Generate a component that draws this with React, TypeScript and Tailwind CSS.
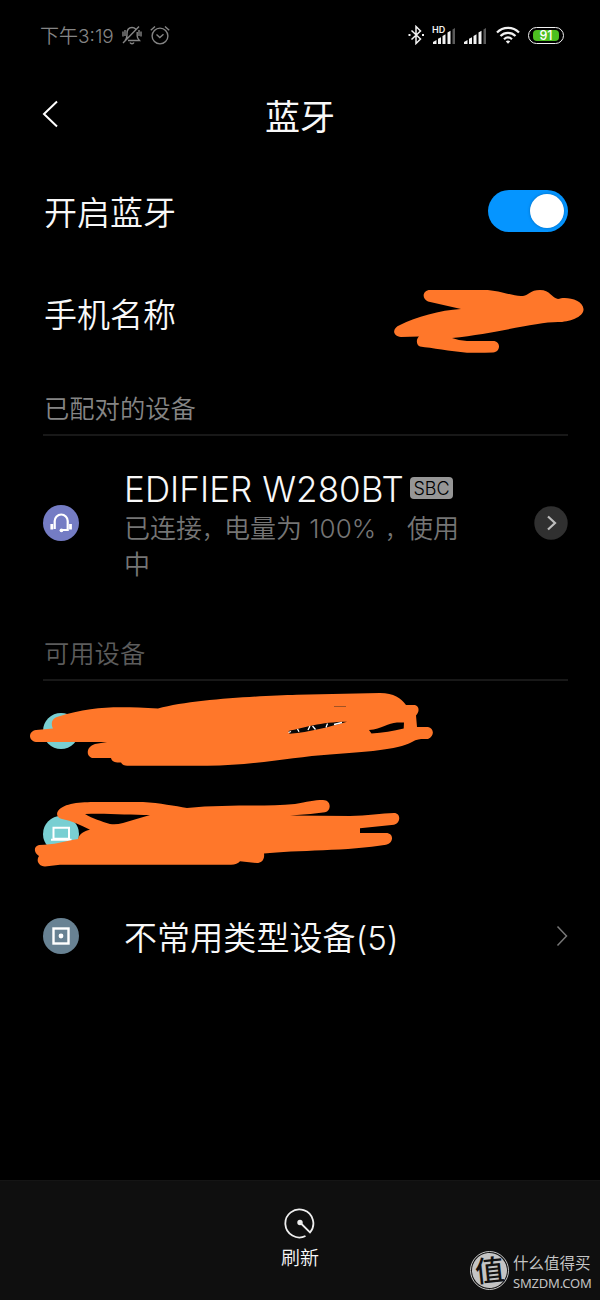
import React from 'react';

const ORANGE = '#ff772a';

function SignalBars() {
    return (
        <svg width="23" height="17" viewBox="0 0 23 17">
            <path d="M0 17v-2l3.500-2v4zM5 17v-5.200l3-1.500V17zM9.500 17V9l3-1.800V17zM14.500 17V5.500l3-1.800V17z" fill="#f2f2f2" />
            <path d="M19.500 17V2.500l2.500-1.500v16z" fill="#5a5a5a" />
        </svg>
    );
}

function StatusBar() {
    return (
        <div className="h-[70px] pl-10 pr-9 flex items-center justify-between text-[#858585]">
            <div className="flex items-center">
                <span className="w-[73px] pt-[2px] text-[19px] leading-none whitespace-nowrap">下午3:19</span>
                <svg className="ml-[9px]" width="20" height="20" viewBox="0 0 20 20" fill="none" stroke="currentColor" strokeWidth="1.400">
                    <path d="M3 15.500c2-2 2-3 2-7C5 4.500 7 2.500 10 2.500c1.500 0 2.800.5 3.700 1.400M15.200 7v4c0 2 .8 3 2.200 4.500H6M1 18 17 1.500M8 17.500c.8 1.600 3.200 1.600 4 0" />
                    <path d="M1 6.500v5M3 5v6M17 5v6M19 6.500v5" />
                </svg>
                <svg className="ml-[8px]" width="20" height="20" viewBox="0 0 20 20" fill="none" stroke="currentColor" strokeWidth="1.400">
                    <circle cx="10" cy="11" r="7.900" />
                    <path d="M.8 5.200 5 1.500M19.200 5.200 15 1.500M6.500 9.500l3.300 3 3.700-3.300" />
                </svg>
            </div>
            <div className="flex items-center">
                <svg width="17" height="20" viewBox="0 0 17 20" fill="none" stroke="#f2f2f2" strokeWidth="1.500">
                    <path d="m3.500 5.500 9 8.500-4.500 4.500V1.500L12.500 6l-9 8.500" />
                    <path d="M.5 10h2M14 10h2" strokeWidth="2" />
                </svg>
                <div className="relative ml-[8px]">
                    <span className="absolute left-[-1px] top-[-2px] text-[9px] font-semibold leading-none text-[#f2f2f2]">HD</span>
                    <SignalBars />
                </div>
                <div className="ml-[8px]">
                    <SignalBars />
                </div>
                <svg className="ml-[9px]" width="24" height="18" viewBox="0 0 24 18" fill="none" stroke="#f2f2f2" strokeWidth="2.200">
                    <path d="M1 6.500c6-6.200 16-6.200 22 0M4.500 10c4.300-4.200 10.700-4.200 15 0M8 13.300c2.400-2.200 5.600-2.200 8 0" />
                    <path d="m9.800 15.500 2.200 2.300 2.200-2.300c-1.200-1.200-3.200-1.200-4.400 0z" fill="#f2f2f2" stroke="none" />
                </svg>
                <div className="ml-[8px] w-9 h-[17px] rounded-full border-[1.500px] border-[#f2f2f2] px-[4px] py-[2px]">
                    <div className="h-full rounded-[4px] bg-[#4cbf1f] text-white text-[12.500px] font-medium flex items-center justify-center leading-none pt-[2px]">91</div>
                </div>
            </div>
        </div>
    );
}

function SectionTitle({ children, dim }: { children: React.ReactNode; dim?: boolean }) {
    return (
        <div className="mr-8 ml-[43px] h-[69px] pt-[29px] border-b-2 border-[#181818]">
            <div className={`pl-px text-[25.300px] leading-[26px] ${dim ? 'text-[#5c5c5c]' : 'text-[#858585]'}`}>{children}</div>
        </div>
    );
}

function DeviceIcon({ color, children }: { color: string; children?: React.ReactNode }) {
    return (
        <svg className="shrink-0 -mt-[2px]" width="36" height="36" viewBox="0 0 36 36" fill="none" stroke="#fff">
            <circle cx="18" cy="18" r="18" fill={color} stroke="none" />
            {children}
        </svg>
    );
}

export default function App() {
    return (
        <div className="w-[600px] h-[1300px] bg-black text-[#f8f8f8] font-[350] flex flex-col overflow-hidden font-[Inter,'Noto_Sans_CJK_SC',sans-serif]">
            <StatusBar />
            <header className="h-[89px] px-[42px] grid grid-cols-[1fr_auto_1fr] items-center">
                <svg className="-mt-[2px]" width="16" height="28" viewBox="0 0 16 28" fill="none" stroke="#fff" strokeWidth="2">
                    <path d="M15 1.500 2 14l13 12.500" />
                </svg>
                <h1 className="pt-[5px] text-[35px] leading-none font-normal">蓝牙</h1>
            </header>

            <div className="h-[104px] pl-11 pr-8 flex items-center justify-between text-[33px]">
                <span className="pt-[5px]">开启蓝牙</span>
                <div className="w-20 h-[42px] rounded-full bg-[#0595ff] flex items-center justify-end pr-[4px]">
                    <div className="size-[34px] rounded-full bg-white shadow-[0_0_3px_#0369b8]" />
                </div>
            </div>
            <div className="relative h-[104px] pl-11 flex items-center text-[33px]">
                <span className="pt-[2px]">手机名称</span>
                <svg className="absolute left-[390px] top-[21px]" width="200" height="72" viewBox="390 284 200 72">
                    <path
                        fill={ORANGE}
                        d="M430 290H484C501 290 513 297 523 296C529 295 530 290 540 290C550 290 552 298 558 299C565 296 583 299 583.500 309C584 317 569 322 558 322C536 322 498 333 452 338Q460 341 467 341L493 341C501 341 501 352 493 352.500Q480 353 467 352.700C450 351 432 348 420 346.500C416 345 416 339 419 336.500L401 337C392 336 392 328 400 325C416 317 440 310 461 309L428 301.500C421 298 423 290 430 290Z"
                    />
                </svg>
            </div>

            <SectionTitle>已配对的设备</SectionTitle>
            <div className="h-[176px] pl-[43px] pr-8 flex items-center">
                <DeviceIcon color="#747cc4">
                    <path d="M11.700 24v-8a6.500 6.500 0 0 1 13 0v9h-5" strokeWidth="2.200" />
                    <path d="M8.800 19v5.500M27.500 19v5.500" strokeWidth="2.800" />
                    <circle cx="18.500" cy="25.300" r="1.900" fill="#fff" stroke="none" />
                </DeviceIcon>
                <div className="ml-[45px] flex-1 pt-[6px]">
                    <div className="flex items-center h-9">
                        <span className="w-[280px] text-[35px] tracking-[0.050px] leading-none whitespace-nowrap font-light">EDIFIER W280BT</span>
                        <span className="ml-[6px] -mt-[3px] w-[43px] h-[22px] rounded bg-[#969696] text-black text-[18px] leading-[23px] text-center font-light">SBC</span>
                    </div>
                    <p className="w-[350px] mt-[4px] text-[26px] leading-9 text-[#757575]">
                        已连接<span className="text-[22px] leading-none">，</span>电量为 100%<span className="pl-[9px] text-[22px] leading-none">，</span>使用中
                    </p>
                </div>
                <svg className="-mt-[2px]" width="34" height="34" viewBox="0 0 34 34" fill="none">
                    <circle cx="17" cy="17" r="16.700" fill="#303030" />
                    <path d="m14 10.500 7 6.500-7 6.500" stroke="#bdbdbd" strokeWidth="2.200" />
                </svg>
            </div>

            <SectionTitle dim>可用设备</SectionTitle>
            <div className="relative h-[102px] pl-[43px] flex items-center">
                <DeviceIcon color="#79cfd2" />
                <svg className="absolute left-[25px] top-[4px]" width="415" height="90" viewBox="25 685 415 90">
                    <path
                        fill={ORANGE}
                        fillRule="evenodd"
                        d="M36 730C28 731 28 741 36 742H107L95 744C85 747 86 758 94 758H111C112 762 116 763 121 762.500Q123 766 128 765.700H205C250 766 292 757 330 754.500C365 752 397 750 412 742C419 738 424 739.500 428 739C435 736 434 728 428 727H417L416 715.500C420 711 419 706 415 705H406C401 698 394 693 380 693L297 694.700C260 696 193 699 158 708.500C120 707 95 705 57 717C51 719 51 725 53 728.500ZM369 730C382 729 388 723 397 722.500H404L403.700 728.500C393 731 383 733 371.500 733.500Z"
                    />
                    <path d="M288.500 731C304 727.500 320 722 347 721.700C329 727 310 732 289.500 733.700Z" fill="#080808" />
                    <path d="M334 706.500h12" stroke="#8a4a23" strokeWidth=".8" />
                    <path d="m288.500 732.500 2.500-1M297.500 729l1.500 2.800M308 730l2-4M312.500 726l3 3.500M326 727.500l1.500-4M334 724.500l8-2" stroke="#fff" strokeWidth="1.300" />
                </svg>
            </div>
            <div className="relative h-[103px] pl-[43px] flex items-center">
                <DeviceIcon color="#79cfd2">
                    <path d="M10.500 11.800h15.500v11H10.500zM8 23.700h20.500" strokeWidth="2" />
                </DeviceIcon>
                <svg className="absolute left-[25px] top-[12px]" width="385" height="78" viewBox="25 795 385 78">
                    <path
                        fill={ORANGE}
                        fillRule="evenodd"
                        d="M58 811C64 803 80 802 97 802H143C160 803 175 806 187 808C225 804 262 807 295 804C307 802 314 800 323 800C331 800 332 810 325 812.300Q307 815 290 815.500L350 816C367 816 382 813 394 813C401 813 401 823 394 824.700L360 828.300V833H386C394 833 394 843 386 844.700C350 851 295 850 264 853.500C265 860 261 863 257 863L240 861.300Q237 865 230 864.700H60L45 866.500C38 866 36 860 39 856C33 852 34 846 39 845C53 845 66 841 78 839C79 834 84 831 90 829.700C80 825 72 821 62 819C57 818 56 814 58 811ZM85 814C105 813 130 815 150 815L123 823Q116 825 110 824C101 821 93 819 85 814Z"
                    />
                </svg>
            </div>
            <div className="h-[102px] pl-[43px] pr-8 flex items-center">
                <DeviceIcon color="#688293">
                    <rect x="10.500" y="10.500" width="15" height="15" strokeWidth="2.400" />
                    <circle cx="18" cy="18" r="2.400" fill="#fff" stroke="none" />
                </DeviceIcon>
                <span className="ml-[45px] flex-1 pt-[3px] text-[33px] tracking-[0.100px]">不常用类型设备(5)</span>
                <svg className="-mt-[2px]" width="12" height="22" viewBox="0 0 12 22" fill="none" stroke="#777" strokeWidth="1.500">
                    <path d="m1.500 1.500 9 9.500-9 9.500" />
                </svg>
            </div>

            <footer className="relative mt-auto h-[120px] bg-[#0f0f0f] border-t border-[#151515] flex flex-col items-center pt-[26px]">
                <svg width="32" height="32" viewBox="0 0 32 32" fill="none" stroke="#eee" strokeWidth="1.800">
                    <path d="M21.500 29A14 14 0 1 1 26 25.500L16 15.500" />
                    <circle cx="16" cy="15.500" r="2.700" fill="#eee" stroke="none" />
                </svg>
                <span className="mt-[8px] text-[19px] leading-6">刷新</span>
                <div className="absolute left-[470px] top-[68px] flex items-center text-[#c4c4c4]">
                    <div className="-mt-[2px] size-[39px] rounded-full border border-[#c4c4c4] p-px">
                        <div className="size-full rounded-full bg-[#c4c4c4] text-[#111] text-[29px] font-medium leading-[36px] text-center -rotate-6">值</div>
                    </div>
                    <div className="ml-[4px] pt-[5px] font-normal">
                        <div className="text-[15.500px] leading-[20px]">什么值得买</div>
                        <div className="text-[13px] tracking-[-0.200px] leading-[19px] font-['Noto_Sans']">SMZDM.COM</div>
                    </div>
                </div>
            </footer>
        </div>
    );
}
